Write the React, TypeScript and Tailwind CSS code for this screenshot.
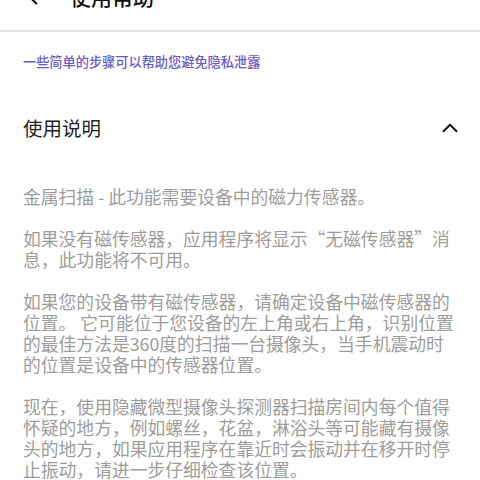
import { ChevronLeft, ChevronUp } from 'lucide-react';

const paragraphs = [
  '金属扫描 - 此功能需要设备中的磁力传感器。',
  '如果没有磁传感器，应用程序将显示“无磁传感器”消息，此功能将不可用。',
  '如果您的设备带有磁传感器，请确定设备中磁传感器的位置。 它可能位于您设备的左上角或右上角，识别位置的最佳方法是360度的扫描一台摄像头，当手机震动时的位置是设备中的传感器位置。',
  '现在，使用隐藏微型摄像头探测器扫描房间内每个值得怀疑的地方，例如螺丝，花盆，淋浴头等可能藏有摄像头的地方，如果应用程序在靠近时会振动并在移开时停止振动，请进一步仔细检查该位置。',
];

export default function App() {
  return (
    <div className="h-[480px] w-[480px] overflow-hidden bg-white font-['Noto_Sans_CJK_SC','Noto_Sans',sans-serif]">
      <div className="-mt-[36px] flex h-[68px] items-center border-b-2 border-[#e3e3e3]">
        <ChevronLeft className="ml-[20px] h-[26px] w-[26px] text-[#111]" strokeWidth={2} />
        <span className="ml-[24px] text-[21px] font-medium text-[#111]">使用帮助</span>
      </div>

      <p className="mt-[21px] px-[23px] text-[13.2px] leading-[18px] font-medium text-[#6a5bc0]">
        一些简单的步骤可以帮助您避免隐私泄露
      </p>

      <div className="mt-[43px] flex h-[28px] items-center justify-between pl-[23px] pr-[17px]">
        <span className="text-[19.5px] text-[#222]">使用说明</span>
        <ChevronUp className="h-[26px] w-[26px] text-[#111]" strokeWidth={1.8} />
      </div>

      <div className="mt-[44px] flex flex-col gap-[21px] px-[23px]">
        {paragraphs.map((text) => (
          <p key={text} className="text-[17.8px] leading-[21px] text-[#9d9d9d]">
            {text}
          </p>
        ))}
      </div>
    </div>
  );
}
